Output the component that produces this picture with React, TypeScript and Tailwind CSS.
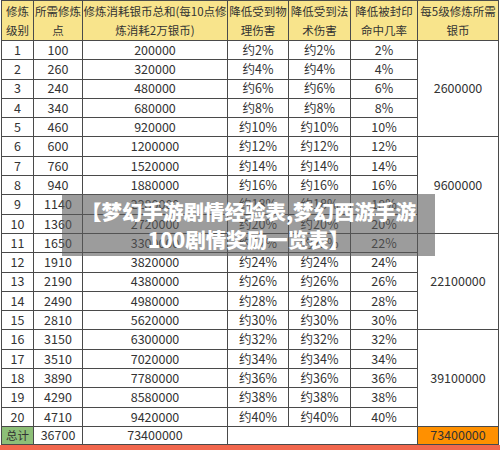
import React from 'react'

const costs = [100, 260, 240, 340, 460, 600, 760, 940, 1140, 1360, 1650, 1910, 2190, 2490, 2810, 3150, 3510, 3890, 4290, 4710]
const silver = ['200000', '320000', '480000', '680000', '920000', '1200000', '1520000', '1880000', '2280000', '2720000', '3300000', '3820000', '4380000', '4980000', '5620000', '6300000', '7020000', '7780000', '8580000', '9420000']
const groups = ['2600000', '9600000', '22100000', '39100000']

const cell = 'border border-[#4a4a4a] text-center p-0 whitespace-nowrap overflow-hidden'

const App = () => {
  return (
    <div className="relative w-[500px] h-[450px] bg-white overflow-hidden text-[#333] font-['Noto_Sans_CJK_SC','Noto_Sans',sans-serif]">
      <table className="ml-[1px] w-[497px] table-fixed border-collapse text-[12.5px] leading-none">
        <colgroup>
          <col className="w-[32px]" />
          <col className="w-[49px]" />
          <col className="w-[145px]" />
          <col className="w-[61px]" />
          <col className="w-[62px]" />
          <col className="w-[67px]" />
          <col className="w-[81px]" />
        </colgroup>
        <thead>
          <tr className="h-[40px] bg-[#f8e48c] text-[11.5px] leading-[19px]">
            <th className={cell + ' font-normal'}>修炼<br />级别</th>
            <th className={cell + ' font-normal'}>所需修炼<br />点</th>
            <th className={cell + ' font-normal'}>修炼消耗银币总和(每10点修<br />炼消耗2万银币)</th>
            <th className={cell + ' font-normal'}>降低受到物<br />理伤害</th>
            <th className={cell + ' font-normal'}>降低受到法<br />术伤害</th>
            <th className={cell + ' font-normal'}>降低被封印<br />命中几率</th>
            <th className={cell + ' font-normal'}>每5级修炼所需<br />银币</th>
          </tr>
        </thead>
        <tbody>
          {costs.map((c, i) => (
            <tr key={i} className="h-[19.3px]">
              <td className={cell}>{i + 1}</td>
              <td className={cell}>{c}</td>
              <td className={cell}>{silver[i]}</td>
              <td className={cell}>约{(i + 1) * 2}%</td>
              <td className={cell}>约{(i + 1) * 2}%</td>
              <td className={cell}>{(i + 1) * 2}%</td>
              {i % 5 === 0 && (
                <td rowSpan={5} className={cell}>{groups[i / 5]}</td>
              )}
            </tr>
          ))}
          <tr className="h-[18px]">
            <td className={cell + ' bg-[#8dbf78] text-[11.5px]'}>总计</td>
            <td className={cell}>36700</td>
            <td className={cell}>73400000</td>
            <td colSpan={3} className={cell}></td>
            <td className={cell + ' bg-[#ff9000]'}>73400000</td>
          </tr>
        </tbody>
      </table>
      <div className="h-[8px] bg-[#f2674d]" />

      <div className="absolute left-[62px] top-[194px] w-[373px] h-[62px] bg-[rgba(90,90,90,0.6)] flex flex-col items-center justify-center text-white font-black text-[20.5px] leading-[28px]">
        <div>【梦幻手游剧情经验表,梦幻西游手游</div>
        <div>100剧情奖励一览表】</div>
      </div>
    </div>
  )
}

export default App
